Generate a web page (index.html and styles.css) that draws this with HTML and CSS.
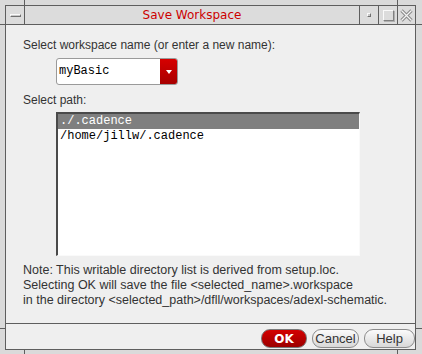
FILE: index.html
```html
<!DOCTYPE html>
<html>
<head>
    <title>Save Workspace</title>
    <link rel="stylesheet" href="styles.css">
</head>
<body>
    <div class="frame">
        <span class="tick tick-top-left"></span>
        <span class="tick tick-top-right"></span>
        <span class="tick tick-bottom-left"></span>
        <span class="tick tick-bottom-right"></span>
        <span class="tick tick-left-top"></span>
        <span class="tick tick-left-bottom"></span>
        <span class="tick tick-right-top"></span>
        <span class="tick tick-right-bottom"></span>
        <div class="window">
            <div class="titlebar">
                <div class="tb-button menu-button"><span class="menu-bar"></span></div>
                <div class="title">Save Workspace</div>
                <div class="tb-button"><span class="min-box"></span></div>
                <div class="tb-button"><span class="max-box"></span></div>
                <div class="tb-button close-button">
                    <svg width="13" height="13" viewBox="0 0 13 13">
                        <path d="M1.5 1.5 L11.5 11.5 M11.5 1.5 L1.5 11.5" stroke="#8a8a8a" stroke-width="3.2" fill="none"/>
                        <path d="M1.5 1.5 L11.5 11.5 M11.5 1.5 L1.5 11.5" stroke="#f4f4f4" stroke-width="1.2" fill="none"/>
                    </svg>
                </div>
            </div>
            <div class="dialog">
                <div class="dialog-body">
                    <div class="label">Select workspace name (or enter a new name):</div>
                    <div class="combo">
                        <div class="combo-text">myBasic</div>
                        <div class="combo-arrow"><span class="arrow"></span></div>
                    </div>
                    <div class="label path-label">Select path:</div>
                    <ul class="path-list">
                        <li class="selected">./.cadence</li>
                        <li>/home/jillw/.cadence</li>
                    </ul>
                    <div class="note">
                        <div>Note: This writable directory list is derived from setup.loc.</div>
                        <div>Selecting OK will save the file &lt;selected_name&gt;.workspace</div>
                        <div>in the directory &lt;selected_path&gt;/dfll/workspaces/adexl-schematic.</div>
                    </div>
                </div>
                <div class="button-row">
                    <button type="button" class="btn btn-ok">OK</button>
                    <button type="button" class="btn">Cancel</button>
                    <button type="button" class="btn">Help</button>
                </div>
            </div>
        </div>
    </div>
</body>
</html>
```

FILE: styles.css
```css
body {
    margin: 0;
    padding: 0;
    font-family: "Liberation Sans", Arial, sans-serif;
    font-size: 12px;
    color: #333;
    background-color: #dadada;
}
.frame {
    position: relative;
    width: 422px;
    height: 354px;
    box-sizing: border-box;
    padding: 5px 6px 4px 5px;
    background-color: #dadada;
}
.tick {
    position: absolute;
    background-color: #5e5e5e;
}
.tick-top-left, .tick-top-right, .tick-bottom-left, .tick-bottom-right {
    width: 1px;
    height: 5px;
}
.tick-top-left { left: 24px; top: 0; }
.tick-top-right { left: 397px; top: 0; }
.tick-bottom-left { left: 24px; bottom: 0; }
.tick-bottom-right { left: 397px; bottom: 0; }
.tick-left-top, .tick-left-bottom, .tick-right-top, .tick-right-bottom {
    width: 6px;
    height: 1px;
}
.tick-left-top { left: 0; top: 24px; width: 5px; }
.tick-left-bottom { left: 0; top: 328px; width: 5px; }
.tick-right-top { right: 0; top: 24px; }
.tick-right-bottom { right: 0; top: 328px; }
.window {
    width: 411px;
    height: 345px;
    box-sizing: border-box;
    border: 1px solid #5e5e5e;
    display: flex;
    flex-direction: column;
}
.titlebar {
    display: flex;
    height: 18px;
    border-bottom: 1px solid #5e5e5e;
    background-color: #dcdcdc;
}
.tb-button {
    width: 18px;
    display: flex;
    align-items: center;
    justify-content: center;
    border-left: 1px solid #5e5e5e;
}
.menu-button {
    border-left: none;
    border-right: 1px solid #5e5e5e;
}
.close-button {
    width: 17px;
}
.menu-bar {
    width: 9px;
    height: 1px;
    border: 1px solid;
    border-color: #fafafa #707070 #707070 #fafafa;
    background-color: #c8c8c8;
}
.min-box {
    width: 2px;
    height: 2px;
    border: 1px solid;
    border-color: #fafafa #707070 #707070 #fafafa;
    background-color: #c8c8c8;
}
.max-box {
    width: 9px;
    height: 9px;
    border: 1px solid;
    border-color: #fafafa #808080 #808080 #fafafa;
    box-shadow: 1px 1px 0 #b0b0b0;
}
.title {
    flex: 1;
    text-align: center;
    font-family: "DejaVu Sans", sans-serif;
    font-size: 12px;
    line-height: 18px;
    color: #cc0000;
}
.dialog {
    flex: 1;
    display: flex;
    flex-direction: column;
    background-color: #efefef;
}
.dialog-body {
    flex: 1;
    padding: 13px 0 0 17px;
}
.label {
    line-height: 15px;
}
.combo {
    display: flex;
    width: 122px;
    height: 27px;
    box-sizing: border-box;
    margin: 5px 0 0 33px;
    border: 1px solid #9a9a9a;
    border-radius: 3px;
    overflow: hidden;
    background-color: #fff;
}
.combo-text {
    flex: 1;
    padding-left: 2px;
    font-family: "Liberation Mono", monospace;
    font-size: 12px;
    line-height: 25px;
    color: #000;
}
.combo-arrow {
    width: 17px;
    display: flex;
    align-items: center;
    justify-content: center;
    background: linear-gradient(#d60000, #a80000);
}
.arrow {
    width: 0;
    height: 0;
    border-left: 3px solid transparent;
    border-right: 3px solid transparent;
    border-top: 4px solid #fff;
}
.path-label {
    margin-top: 8px;
}
.path-list {
    list-style-type: none;
    margin: 4px 0 0 33px;
    padding: 0;
    width: 304px;
    height: 144px;
    box-sizing: border-box;
    border-top: 2px solid #4a4a4a;
    border-left: 2px solid #4a4a4a;
    border-right: 1px solid #fafafa;
    border-bottom: 1px solid #fafafa;
    background-color: #fff;
    font-family: "Liberation Mono", monospace;
    font-size: 12px;
    color: #000;
}
.path-list li {
    height: 15px;
    line-height: 15px;
    padding-left: 2px;
}
.path-list li.selected {
    background-color: #7f7f7f;
    color: #fff;
}
.note {
    margin-top: 7px;
    line-height: 15px;
    font-size: 12.5px;
}
.button-row {
    display: flex;
    justify-content: flex-end;
    gap: 5px;
    height: 26px;
    box-sizing: border-box;
    padding-top: 5px;
    border-top: 1px solid #5e5e5e;
}
.btn {
    height: 19px;
    padding: 0;
    width: 48px;
    border: 1px solid #8c8c8c;
    border-radius: 9px;
    background: linear-gradient(#fbfbfb, #d8d8d8);
    font-family: "Liberation Sans", Arial, sans-serif;
    font-size: 13px;
    color: #333;
    cursor: pointer;
}
.btn + .btn {
    width: 47px;
}
.btn:last-child {
    width: 51px;
}
.btn-ok {
    width: 46px;
    background: linear-gradient(#d40000, #9c0000);
    border-color: #7a7a7a;
    color: #fff;
    font-weight: bold;
    font-family: "DejaVu Sans", sans-serif;
    font-size: 12px;
}
```
